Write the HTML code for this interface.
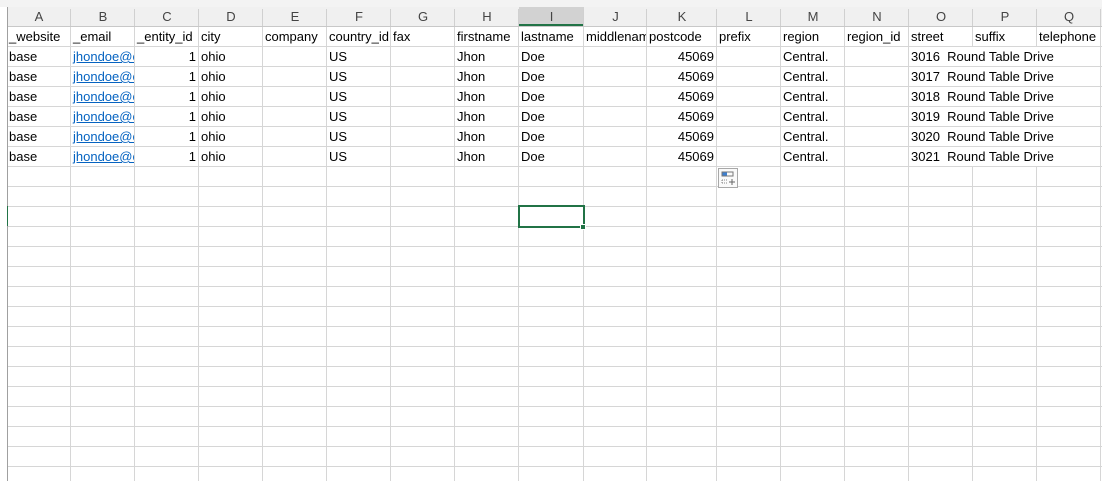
<!DOCTYPE html>
<html><head><meta charset="utf-8"><style>
*{margin:0;padding:0;box-sizing:border-box}
body{width:1102px;height:481px;overflow:hidden;background:#fff;font-family:"Liberation Sans",sans-serif;font-size:13px;color:#000;position:relative}
.top{position:absolute;left:0;top:0;width:1102px;height:7px;background:#f3f3f3}
.hdr{position:absolute;left:7px;top:7px;width:1095px;height:20px;background:#f0f0f0;border-bottom:1px solid #c8c8c8}
.grid{position:absolute;left:7px;top:27px;width:1095px;height:454px;background:repeating-linear-gradient(to bottom,transparent 0,transparent 19px,#d6d6d6 19px,#d6d6d6 20px)}
.v{position:absolute;width:1px;background:#d6d6d6;top:27px;height:454px}
.hv{position:absolute;width:1px;background:#d0d0d0;top:9px;height:17px}
.lh{position:absolute;top:7px;height:19px;line-height:19px;text-align:center;color:#444;font-size:13px}
.c{position:absolute;height:19px;line-height:20px;padding-left:2px;white-space:nowrap;overflow:hidden}
.r{text-align:right;padding-right:2px;padding-left:0}
.a{color:#0563c1;text-decoration:underline}
.w{background:#fff}
</style></head><body>
<div class="top"></div>
<div class="hdr"></div>
<div class="grid"></div>
<div style="position:absolute;left:7px;top:7px;width:1px;height:474px;background:#a0a0a0"></div>
<div style="position:absolute;left:7px;top:206px;width:1px;height:20px;background:#217346"></div>
<div style="position:absolute;left:519px;top:7px;width:65px;height:19px;background:#d2d2d2;border-bottom:2px solid #217346"></div>
<div id="cols"></div>
<script>
var b=[7,71,135,199,263,327,391,455,519,584,647,717,781,845,909,973,1037,1101];
var L="ABCDEFGHIJKLMNOPQ";var h="";
for(var i=0;i<17;i++){h+='<div class="lh" style="left:'+b[i]+'px;width:'+(b[i+1]-b[i])+'px">'+L[i]+'</div>';h+='<div class="v" style="left:'+(b[i+1]-1)+'px"></div><div class="hv" style="left:'+(b[i+1]-1)+'px"></div>';}
var heads=["_website","_email","_entity_id","city","company","country_id","fax","firstname","lastname","middlename","postcode","prefix","region","region_id","street","suffix","telephone"];
function cell(col,row,t,cls,w){var y=27+row*20;w=w||(b[col+1]-b[col]-1);h+='<div class="c '+(cls||'')+'" style="left:'+b[col]+'px;top:'+y+'px;width:'+w+'px">'+t+'</div>';}
for(var i=0;i<17;i++){cell(i,0,heads[i]);}
for(var r=1;r<=6;r++){cell(0,r,'base');cell(1,r,'jhondoe@example.com','a');cell(2,r,'1','r');cell(3,r,'ohio');cell(5,r,'US');cell(7,r,'Jhon');cell(8,r,'Doe');cell(10,r,'45069','r');cell(12,r,'Central.');cell(14,r,(3015+r)+'&nbsp;&nbsp;Round Table Drive','w',191);}
document.getElementById('cols').innerHTML=h;
</script>
<div style="position:absolute;left:518px;top:205px;width:67px;height:23px;border:2px solid #217346"></div>
<div style="position:absolute;left:580px;top:224px;width:6px;height:6px;background:#217346;border:1px solid #fff"></div>
<div style="position:absolute;left:718px;top:168px;width:20px;height:20px;border:1px solid #a8a8a8;background:#fafafa">
<svg width="18" height="18" viewBox="0 0 18 18"><rect x="3" y="3" width="5" height="4" fill="#3c7fd0"/><rect x="3" y="3" width="11" height="4" fill="none" stroke="#777" stroke-width="1"/><path d="M3 11h6M3 14h5M3 11v3" stroke="#888" stroke-dasharray="1 1"/><path d="M13 10v6M10 13h6" stroke="#666"/></svg></div>
</body></html>
